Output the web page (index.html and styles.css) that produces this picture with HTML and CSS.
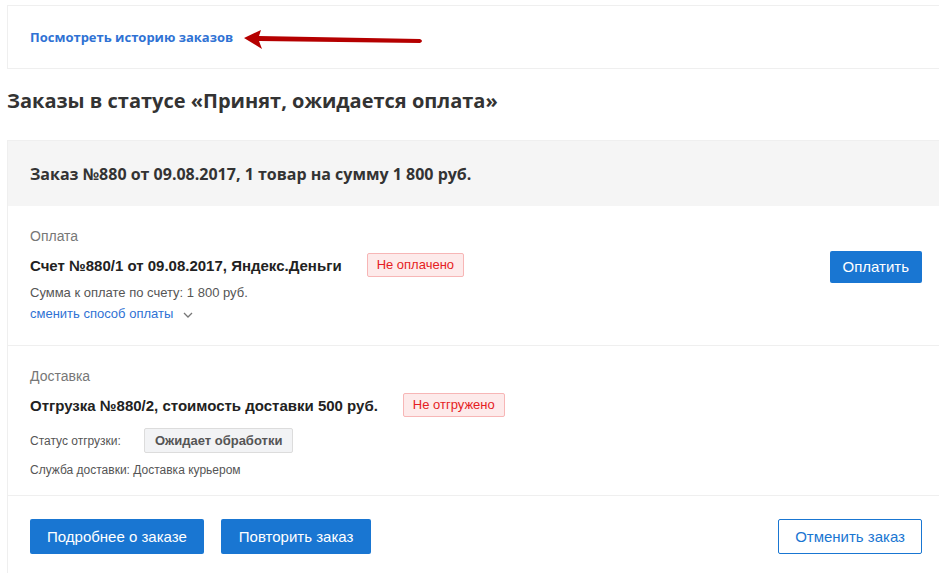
FILE: index.html
```html
<!doctype html>
<html>
<head>
<meta charset="utf-8">
<title>Заказы</title>
<link rel="stylesheet" href="styles.css">
</head>
<body>
    <div class="page">
        <div class="history">
            <a href="#" class="history-link">Посмотреть историю заказов</a>
            <svg class="arrow" width="180" height="20" viewBox="0 0 180 20">
                <path d="M0 8 L17 0 L15 6 L176 9 Q180 11 176 13 L15 11 L18 19 Z" fill="#b50000"/>
            </svg>
        </div>

        <h2 class="status-title">Заказы в статусе «Принят, ожидается оплата»</h2>

        <div class="order">
            <div class="order-head">Заказ №880 от 09.08.2017, 1 товар на сумму 1 800 руб.</div>

            <div class="order-section">
                <div class="section-main">
                    <div class="section-label">Оплата</div>
                    <div class="section-title">
                        <span>Счет №880/1 от 09.08.2017, Яндекс.Деньги</span>
                        <span class="badge">Не оплачено</span>
                    </div>
                    <div class="note note-sum">Сумма к оплате по счету: 1 800 руб.</div>
                    <a href="#" class="change-link">сменить способ оплаты
                        <svg width="10" height="6" viewBox="0 0 10 6"><path d="M1 1 L5 5 L9 1" fill="none" stroke="#777" stroke-width="1.3"/></svg>
                    </a>
                </div>
                <a href="#" class="btn btn-pay">Оплатить</a>
            </div>

            <div class="order-section">
                <div class="section-main">
                    <div class="section-label">Доставка</div>
                    <div class="section-title">
                        <span>Отгрузка №880/2, стоимость доставки 500 руб.</span>
                        <span class="badge">Не отгружено</span>
                    </div>
                    <div class="ship-status">
                        <span class="note">Статус отгрузки:</span>
                        <span class="state">Ожидает обработки</span>
                    </div>
                    <div class="note">Служба доставки: Доставка курьером</div>
                </div>
            </div>

            <div class="order-actions">
                <a href="#" class="btn">Подробнее о заказе</a>
                <a href="#" class="btn">Повторить заказ</a>
                <a href="#" class="btn btn-outline">Отменить заказ</a>
            </div>
        </div>
    </div>
</body>
</html>
```

FILE: styles.css
```css
*{
    margin: 0px;
    padding: 0px;
    box-sizing: border-box;
}
html{
    overflow: hidden;
}
body{
    background-color: white;
    font-family: "Liberation Sans", Arial, sans-serif;
    color: #333;
}
.page{
    width: 938px;
    margin-left: 7px;
    padding-top: 5px;
}
.history{
    height: 64px;
    border: 1px solid #efefef;
    display: flex;
    align-items: center;
    padding-left: 22px;
}
.history-link{
    font-family: "Open Sans", sans-serif;
    font-weight: bold;
    font-size: 13px;
    color: #2f72d4;
    text-decoration: none;
}
.arrow{
    margin-left: 11px;
    margin-top: 5px;
}
.status-title{
    font-family: "Open Sans", sans-serif;
    font-size: 20px;
    font-weight: bold;
    color: #333;
    margin-top: 19px;
    line-height: 26px;
}
.order{
    margin-top: 26px;
    border: 1px solid #efefef;
    border-right: none;
}
.order-head{
    background-color: #f5f5f5;
    height: 65px;
    display: flex;
    align-items: center;
    padding-left: 22px;
    font-family: "Open Sans", sans-serif;
    font-weight: bold;
    font-size: 16px;
    color: #333;
}
.order-section{
    border-bottom: 1px solid #efefef;
    display: flex;
    justify-content: space-between;
    padding: 20px 23px 0px 22px;
}
.order-section:nth-child(2){
    height: 140px;
}
.order-section:nth-child(3){
    height: 150px;
}
.section-label{
    font-size: 14px;
    color: #777;
    line-height: 20px;
}
.section-title{
    display: flex;
    align-items: center;
    margin-top: 7px;
    font-size: 15px;
    font-weight: bold;
    color: #222;
}
.badge{
    margin-left: 25px;
    background-color: #fdeaea;
    border: 1px solid #f7b6b6;
    border-radius: 2px;
    color: #e51c23;
    font-weight: normal;
    font-size: 13px;
    padding: 0px 9px;
    line-height: 22px;
}
.note{
    font-size: 12px;
    color: #555;
    line-height: 20px;
}
.note-sum{
    font-size: 13px;
    margin-top: 6px;
}
.change-link{
    display: inline-block;
    margin-top: 1px;
    font-size: 13px;
    color: #2f72d4;
    text-decoration: none;
    line-height: 20px;
}
.change-link svg{
    margin-left: 6px;
    vertical-align: middle;
}
.ship-status{
    display: flex;
    align-items: center;
    margin-top: 11px;
    margin-bottom: 7px;
}
.state{
    margin-left: 23px;
    background-color: #f2f3f5;
    border: 1px solid #dcdcdc;
    border-radius: 2px;
    font-size: 13px;
    font-weight: bold;
    color: #555;
    padding: 0px 10px;
    line-height: 23px;
}
.btn{
    display: inline-block;
    background-color: #1976d2;
    color: white;
    text-decoration: none;
    font-size: 15px;
    border-radius: 2px;
    padding: 0px 18px;
    line-height: 35px;
    height: 35px;
}
.btn:first-child{
    padding: 0px 17px;
}
.btn-pay{
    margin-top: 25px;
    height: 32px;
    line-height: 32px;
    padding: 0px 13px;
}
.order-actions{
    display: flex;
    gap: 17px;
    padding: 23px 23px 0px 22px;
    height: 90px;
}
.btn-outline{
    margin-left: auto;
    background-color: white;
    border: 1px solid #1976d2;
    color: #1976d2;
    line-height: 33px;
    padding: 0px 16px;
}
```
